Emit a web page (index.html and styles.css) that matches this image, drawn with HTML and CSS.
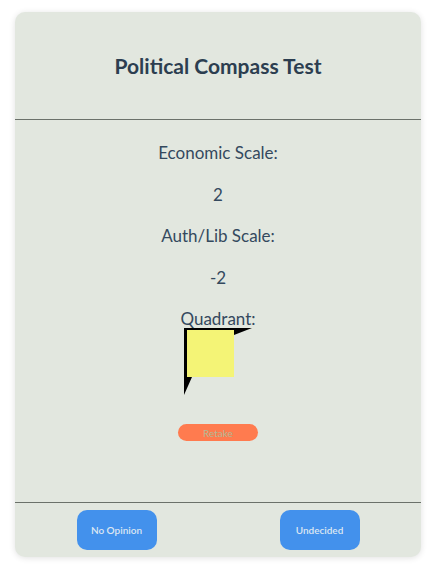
FILE: index.html
```html
<!DOCTYPE html>
<html lang="en">
<head>
    <meta charset="UTF-8">
    <meta name="viewport" content="width=device-width, initial-scale=1.0">
    <title>Political Compass Test</title>
    <link rel="stylesheet" href="styles.css">
</head>
<body>
    <div class="card">
        <div class="card-header">
            <h1 class="title">Political Compass Test</h1>
        </div>
        <div class="results">
            <div class="line">Economic Scale:</div>
            <div class="line">2</div>
            <div class="line">Auth/Lib Scale:</div>
            <div class="line">-2</div>
            <div class="line">Quadrant:</div>
            <!-- quadrant marker -->
            <svg class="quadrant" width="70" height="70" viewBox="0 0 70 70">
                <rect x="4" y="3" width="47" height="47" fill="#f4f476"/>
                <polygon points="1,1 69,1 51,8 51,3 4,3 4,50 9,50 1,68" fill="#000"/>
            </svg>
            <button class="retake">Retake</button>
        </div>
        <div class="card-footer">
            <div class="slot"><button class="answer">No Opinion</button></div>
            <div class="slot"><button class="answer">Undecided</button></div>
        </div>
    </div>
</body>
</html>
```

FILE: styles.css
```css
body {
    margin: 0;
    padding: 12px 17px 16px 15px;
    background-color: #fff;
    font-family: Lato, "Open Sans", sans-serif;
    color: #34495e;
}
.card {
    height: 545px;
    display: flex;
    flex-direction: column;
    background-color: #e2e7df;
    border-radius: 10px;
    box-shadow: 0 1px 6px rgba(0, 0, 0, 0.12);
    overflow: hidden;
}
.card-header {
    height: 107px;
    display: flex;
    align-items: center;
    justify-content: center;
    border-bottom: 1px solid #6b716a;
}
.title {
    margin: 0;
    font-size: 21px;
    font-weight: 700;
    color: #2c3e50;
}
.results {
    flex: 1;
    display: flex;
    flex-direction: column;
    align-items: center;
    padding-top: 21px;
}
.line {
    font-size: 17px;
    line-height: 23px;
    margin-bottom: 18.5px;
}
.line:nth-child(5) {
    margin-bottom: 0;
}
.quadrant {
    display: block;
    margin-top: -3px;
    margin-left: -1px;
}
.retake {
    margin-top: 27px;
    width: 80px;
    height: 17px;
    padding: 0;
    border: none;
    border-radius: 9px;
    background-color: #ff7b4f;
    color: #b3b995;
    font-family: inherit;
    font-size: 10px;
}
.card-footer {
    height: 54px;
    display: flex;
    align-items: center;
    border-top: 1px solid #6b716a;
}
.slot {
    flex: 1;
    display: flex;
    justify-content: center;
}
.answer {
    width: 80px;
    height: 40px;
    border: none;
    border-radius: 10px;
    background-color: #4391ec;
    color: #dce6f2;
    font-family: inherit;
    font-size: 10px;
    font-weight: 600;
}
```
